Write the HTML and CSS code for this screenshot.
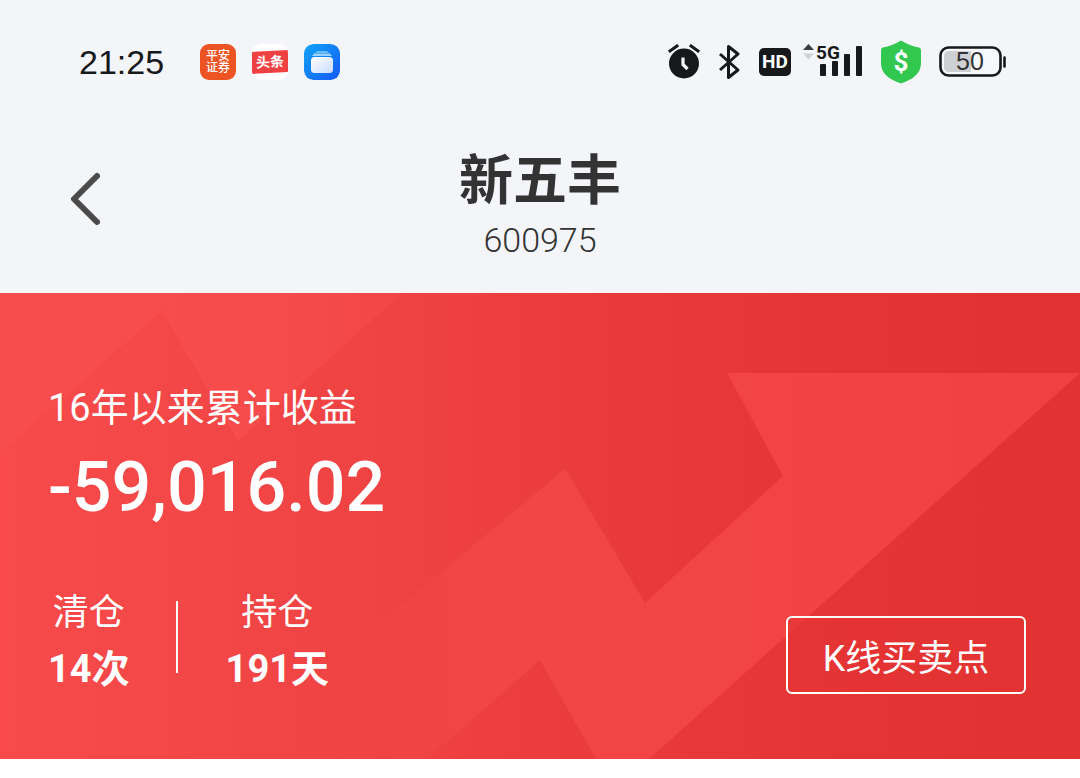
FILE: index.html
```html
<!DOCTYPE html>
<html lang="zh-CN">
<head>
  <meta charset="UTF-8">
  <meta name="viewport" content="width=device-width, initial-scale=1.0">
  <title>新五丰 600975</title>
  <link rel="stylesheet" href="styles.css">
</head>
<body>
  <!-- 状态栏 -->
  <div class="status-bar">
    <div class="status-left">
      <span class="time">21:25</span>
      <span class="app-icon app-pingan"><span>平安</span><span>证券</span></span>
      <span class="app-icon app-toutiao"><span class="toutiao-label">头条</span></span>
      <svg class="app-icon" viewBox="0 0 36 36" aria-hidden="true">
        <defs>
          <linearGradient id="wallet-bg" x1="0" y1="0" x2="1" y2="1">
            <stop offset="0" stop-color="#12a5f8"/>
            <stop offset="1" stop-color="#1558f3"/>
          </linearGradient>
          <linearGradient id="wallet-card" x1="0" y1="0" x2="1" y2="1">
            <stop offset="0" stop-color="#fff"/>
            <stop offset="1" stop-color="#c9dcfc"/>
          </linearGradient>
        </defs>
        <rect width="36" height="36" rx="9" fill="url(#wallet-bg)"/>
        <path d="M13 7h10l2 2H11z" fill="#67bdfa"/>
        <path d="M10 9.500h16l2 2.500H8z" fill="#9ad2fc"/>
        <rect x="7" y="13" width="22" height="16" rx="3.500" fill="url(#wallet-card)"/>
      </svg>
    </div>
    <div class="status-right">
      <svg width="32" height="36" viewBox="0 0 32 36" aria-hidden="true">
        <circle cx="16" cy="19.500" r="15" fill="#17181a"/>
        <path d="M2 7l7-5M30 7l-7-5" stroke="#17181a" stroke-width="3" stroke-linecap="square"/>
        <path d="M15 13.500v7l4.500 4.500" fill="none" stroke="#f3f5f9" stroke-width="3.200"/>
      </svg>
      <svg width="23" height="36" viewBox="0 0 23 36" aria-hidden="true">
        <path d="M2 10l18 16-9.500 7.500v-31L20 10 2 26" fill="none" stroke="#17181a" stroke-width="3" stroke-linejoin="round"/>
      </svg>
      <div class="network">
        <span class="hd">HD</span>
        <svg width="60" height="40" viewBox="0 0 60 40" aria-hidden="true">
          <path d="M0 8l5.500-6L11 8z" fill="#3c3d40"/>
          <path d="M0 11.500h11l-5.500 6z" fill="#cfd0d4"/>
          <text class="signal-text" x="13" y="17">5G</text>
          <g fill="#17181a">
            <rect x="17" y="22" width="6" height="12" rx="1"/>
            <rect x="29" y="19" width="6" height="15" rx="1"/>
            <rect x="41" y="12" width="6" height="22" rx="1"/>
            <rect x="53" y="4" width="6" height="30" rx="1"/>
          </g>
        </svg>
      </div>
      <svg width="40" height="44" viewBox="0 0 40 44" aria-hidden="true">
        <path d="M20 .5Q29 6 38 7.500q2 .5 2 3V23c0 10-7 16-20 20.500C7 39 0 33 0 23V10.500q0-2.500 2-3Q11 6 20 .5z" fill="#32c74f"/>
        <text class="shield-text" x="20" y="31">$</text>
      </svg>
      <svg width="67" height="32" viewBox="0 0 67 32" aria-hidden="true">
        <rect x="1.500" y="1.500" width="60" height="28" rx="8" fill="#f7f8fb" stroke="#17181a" stroke-width="2.600"/>
        <path d="M32 5v21H10q-5 0-5-5V10q0-5 5-5z" fill="#cfd0d4"/>
        <path d="M65.500 11.500v9" stroke="#17181a" stroke-width="2.600" stroke-linecap="round"/>
        <text class="battery-text" x="31" y="24">50</text>
      </svg>
    </div>
  </div>

  <!-- 标题栏 -->
  <header class="header">
    <button class="back" type="button" aria-label="返回">
      <svg width="32" height="56" viewBox="0 0 32 56" aria-hidden="true">
        <path d="M29 5L6 28l23 23" fill="none" stroke="#4b4b4b" stroke-width="6" stroke-linecap="round" stroke-linejoin="round"/>
      </svg>
    </button>
    <div class="stock">
      <h1 class="stock-name">新五丰</h1>
      <p class="stock-code">600975</p>
    </div>
  </header>

  <!-- 收益卡片 -->
  <main class="profit">
    <svg class="profit-bg" viewBox="0 0 1080 466" preserveAspectRatio="none" aria-hidden="true">
      <defs>
        <linearGradient id="arrow" gradientUnits="userSpaceOnUse" x1="300" y1="0" x2="1080" y2="0">
          <stop offset="0" stop-color="#f24545" stop-opacity="0"/>
          <stop offset=".25" stop-color="#f24545"/>
          <stop offset=".6" stop-color="#f14443"/>
          <stop offset="1" stop-color="#ee4140"/>
        </linearGradient>
        <linearGradient id="arrow-small" gradientUnits="userSpaceOnUse" x1="0" y1="0" x2="402" y2="0">
          <stop offset="0" stop-color="#f74d4d"/>
          <stop offset=".6" stop-color="#f64d4c"/>
          <stop offset="1" stop-color="#f24646"/>
        </linearGradient>
      </defs>
      <path d="M0 0h402L238 148 162 18 0 160z" fill="url(#arrow-small)"/>
      <path d="M1080 80H727l56 103-138 127-80-134-347 290h209l113-99 56 99h53z" fill="url(#arrow)"/>
    </svg>
    <p class="profit-label">16年以来累计收益</p>
    <p class="profit-value">-59,016.02</p>
    <div class="profit-bottom">
      <dl class="stats">
        <div class="stat">
          <dt>清仓</dt>
          <dd>14次</dd>
        </div>
        <div class="stat">
          <dt>持仓</dt>
          <dd>191天</dd>
        </div>
      </dl>
      <button class="kline" type="button">K线买卖点</button>
    </div>
  </main>
</body>
</html>
```
FILE: styles.css
```css
* {
  box-sizing: border-box;
}

body {
  margin: 0;
  background: #fff;
  color: #333;
  font-family: Roboto, "Noto Sans CJK SC", sans-serif;
}

h1, p, dl, dd {
  margin: 0;
}

button {
  background: none;
  border: none;
  padding: 0;
  font-family: inherit;
  cursor: pointer;
}

svg {
  display: block;
}

/* 状态栏 */
.status-bar {
  display: flex;
  justify-content: space-between;
  align-items: center;
  height: 124px;
  padding: 0 74px 0 79px;
  background: #f3f5f9;
  color: #17181a;
}

.status-left {
  display: flex;
  align-items: center;
  gap: 16px;
}

.time {
  margin-right: 20px;
  font-family: "Liberation Sans", sans-serif;
  font-size: 34px;
  line-height: 40px;
}

.app-icon {
  display: flex;
  flex-direction: column;
  align-items: center;
  justify-content: center;
  width: 36px;
  height: 36px;
  border-radius: 9px;
  overflow: hidden;
  color: #fff;
  font-weight: 700;
}

.app-pingan {
  background: #ed5424;
  font-size: 12px;
  font-weight: 500;
  line-height: 12px;
}

.app-toutiao {
  background: #fff;
}

.toutiao-label {
  width: 40px;
  background: #f04142;
  font-size: 14px;
  line-height: 22px;
  text-align: center;
  transform: rotate(-3deg);
}

.status-right {
  display: flex;
  align-items: center;
  gap: 18px;
}

.network {
  display: flex;
  align-items: center;
  gap: 12px;
}

.hd {
  width: 32px;
  border-radius: 5px;
  background: #17181a;
  color: #fff;
  font-size: 19px;
  font-weight: 700;
  line-height: 28px;
  text-align: center;
}

.signal-text {
  font-size: 19px;
  font-weight: 700;
  fill: #17181a;
}

.shield-text {
  font-size: 26px;
  font-weight: 700;
  text-anchor: middle;
  fill: #fff;
}

.battery-text {
  font-family: "Liberation Sans", sans-serif;
  font-size: 25px;
  text-anchor: middle;
  fill: #333;
}

/* 标题栏 */
.header {
  display: grid;
  grid-template-columns: 1fr auto 1fr;
  align-items: center;
  padding: 22px 68px 31px;
  background: #f3f5f9;
}

.back {
  justify-self: start;
  padding-bottom: 10px;
}

.stock {
  text-align: center;
}

.stock-name {
  font-size: 54px;
  font-weight: 700;
  line-height: 72px;
}

.stock-code {
  font-size: 34px;
  font-weight: 300;
  line-height: 44px;
}

/* 收益卡片 */
.profit {
  position: relative;
  padding: 88px 54px 62px 48px;
  background: linear-gradient(90deg, #f84a4a 0%, #f14545 26%, #ee4040 42%, #e93a3a 58%, #e63535 75%, #e33232 92%);
  color: #fff;
}

.profit-bg {
  position: absolute;
  inset: 0;
  width: 100%;
  height: 100%;
}

.profit-label,
.profit-value,
.profit-bottom {
  position: relative;
}

.profit-label {
  font-size: 38px;
  font-weight: 400;
  line-height: 54px;
}

.profit-value {
  font-size: 70px;
  font-weight: 500;
  line-height: 104px;
}

.profit-bottom {
  display: flex;
  justify-content: space-between;
  align-items: flex-end;
  margin-top: 46px;
}

.stats {
  display: flex;
}

.stat {
  text-align: center;
}

.stat + .stat {
  position: relative;
  margin-left: 96px;
}

/* 竖线分隔 */
.stat + .stat::before {
  content: "";
  position: absolute;
  top: 16px;
  left: -50px;
  width: 2px;
  height: 72px;
  background: #fff;
}

.stat dt {
  font-size: 36px;
  font-weight: 400;
  line-height: 56px;
}

.stat dd {
  font-size: 38px;
  font-weight: 700;
  line-height: 56px;
}

.kline {
  width: 240px;
  height: 78px;
  margin-bottom: 3px;
  border: 2px solid #fff;
  border-radius: 6px;
  background: rgba(229, 52, 52, .6);
  color: #fff;
  font-size: 36px;
  font-weight: 400;
}
```
